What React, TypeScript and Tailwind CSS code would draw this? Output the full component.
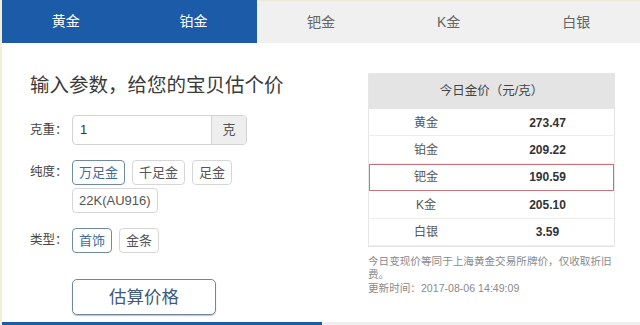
import React from 'react';

const font = { fontFamily: '"Liberation Sans", "Noto Sans CJK SC", sans-serif' };

const tabs = ['黄金', '铂金', '钯金', 'K金', '白银'];

const prices = [
    { name: '黄金', value: '273.47' },
    { name: '铂金', value: '209.22' },
    { name: '钯金', value: '190.59', hot: true },
    { name: 'K金', value: '205.10' },
    { name: '白银', value: '3.59' },
];

const Option = ({ label, active = false }: { label: string; active?: boolean }) => (
    <span
        className={`flex h-[25px] items-center rounded-[4px] border px-[6px] text-[13px] ${
            active ? 'border-[#6f8aa6] text-[#3f6c9c]' : 'border-[#d6d6d6] text-[#555]'
        }`}
    >
        {label}
    </span>
);

export default function App() {
    return (
        <div className="flex h-[325px] w-[640px] flex-col overflow-hidden border-l-2 border-[#f1eed9] bg-white text-[#333]" style={font}>
            {/* tabs */}
            <div className="grid h-[43px] shrink-0 grid-cols-5">
                {tabs.map((t, i) => (
                    <div
                        key={t}
                        className={`flex items-center justify-center text-[14px] ${
                            i < 2 ? 'bg-[#1b5ba7] text-white' : 'border-t border-[#ebe8d6] bg-[#f0f0f0] text-[#666]'
                        }`}
                    >
                        {t}
                    </div>
                ))}
            </div>

            <div className="flex flex-1">
                {/* form */}
                <div className="w-[366px] pl-[28px] pt-[29px]">
                    <h1 className="h-[26px] text-[19.5px] leading-[26px] text-[#3a3a3a]">输入参数，给您的宝贝估个价</h1>

                    <div className="mt-[17px] flex h-[30px] items-center">
                        <span className="w-[42px] text-[12.5px] text-[#444]">克重：</span>
                        <div className="flex h-[30px] w-[175px] overflow-hidden rounded-[4px] border border-[#d2d2d2]">
                            <span className="flex flex-1 items-center pl-[7px] text-[13px] text-[#333]">1</span>
                            <span className="flex w-[35px] items-center justify-center border-l border-[#d2d2d2] bg-[#eeeeee] text-[13px] text-[#555]">克</span>
                        </div>
                    </div>

                    <div className="mt-[15px] flex">
                        <span className="flex h-[25px] w-[42px] items-center text-[12.5px] text-[#444]">纯度：</span>
                        <div className="flex w-[170px] flex-wrap gap-x-[7px] gap-y-[3px]">
                            <Option label="万足金" active />
                            <Option label="千足金" />
                            <Option label="足金" />
                            <Option label="22K(AU916)" />
                        </div>
                    </div>

                    <div className="mt-[15px] flex items-center">
                        <span className="w-[42px] text-[12.5px] text-[#444]">类型：</span>
                        <div className="flex gap-x-[7px]">
                            <Option label="首饰" active />
                            <Option label="金条" />
                        </div>
                    </div>

                    <button className="ml-[42px] mt-[26px] flex h-[36px] w-[144px] items-center justify-center rounded-[5px] border border-[#71869b] text-[17.5px] text-[#3e5b79] shadow-[0_1px_1px_rgba(0,0,0,0.25)]">
                        估算价格
                    </button>
                </div>

                {/* price table */}
                <div className="w-[247px] pt-[30px]">
                    <div className="border border-[#e6e6e6]">
                        <div className="flex h-[35px] items-center justify-center bg-[#e4e4e4] text-[12.5px] text-[#444]">
                            今日金价（元/克）
                        </div>
                        {prices.map((p) => (
                            <div
                                key={p.name}
                                className={`flex h-[27.4px] items-center border ${
                                    p.hot ? 'border-[#c9747c]' : 'border-transparent border-b-[#ececec]'
                                }`}
                            >
                                <span className="w-[112px] text-center text-[12px] text-[#555]">{p.name}</span>
                                <span className="flex-1 text-center text-[12px] font-bold text-[#333]">{p.value}</span>
                            </div>
                        ))}
                    </div>
                    <div className="mt-[8px] text-[10.6px] leading-[13.5px] text-[#8a8a8a]">
                        <p className="whitespace-nowrap">今日变现价等同于上海黄金交易所牌价，仅收取折旧</p>
                        <p>费。</p>
                        <p>更新时间：2017-08-06 14:49:09</p>
                    </div>
                </div>
            </div>

            {/* bottom strip */}
            <div className="flex h-[3px] shrink-0">
                <div className="w-[320px] bg-[#1b5ba7]" />
                <div className="flex-1 bg-[#eeeeee]" />
            </div>
        </div>
    );
}
